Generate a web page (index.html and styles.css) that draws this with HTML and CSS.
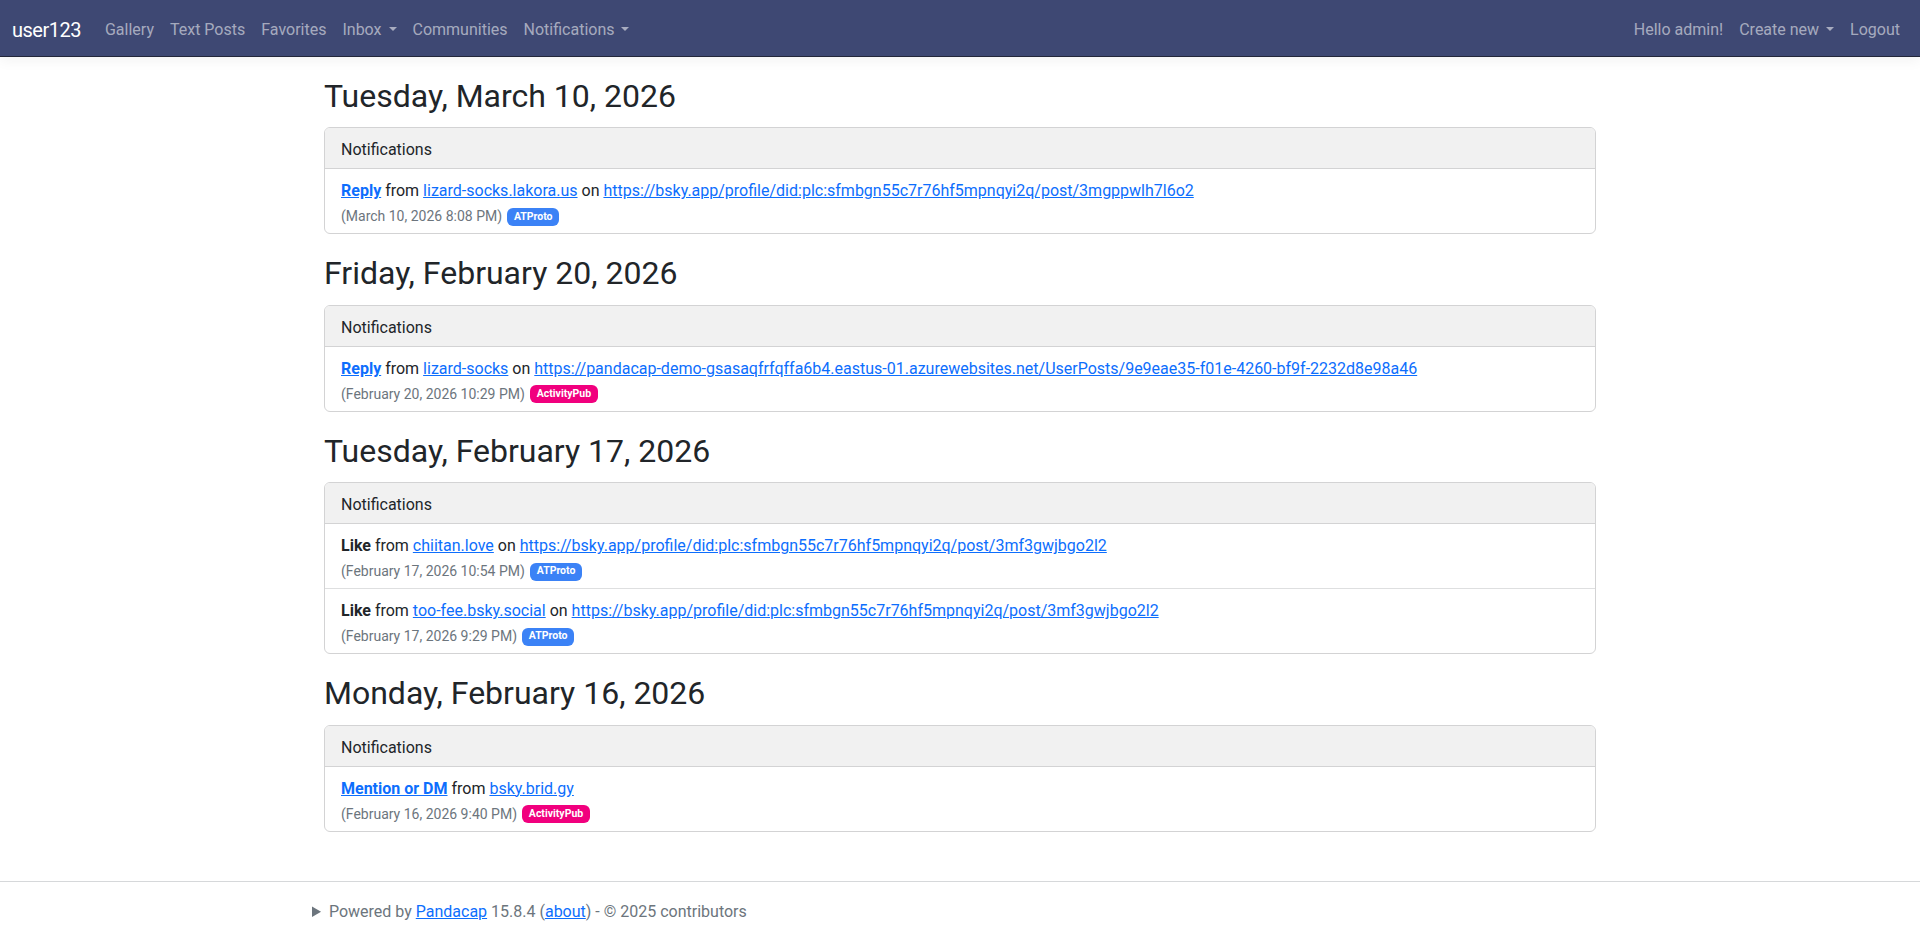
FILE: index.html
```html
<!DOCTYPE html>
<html lang="en">
<head>
  <meta charset="UTF-8">
  <title>Notifications - user123</title>
  <link rel="stylesheet" href="styles.css">
</head>
<body>
  <header>
    <nav class="navbar">
      <div class="navbar-inner">
        <a class="brand" href="#">user123</a>
        <ul class="nav">
          <li><a class="nav-link" href="#">Gallery</a></li>
          <li><a class="nav-link" href="#">Text Posts</a></li>
          <li><a class="nav-link" href="#">Favorites</a></li>
          <li><a class="nav-link dropdown-toggle" href="#">Inbox</a></li>
          <li><a class="nav-link" href="#">Communities</a></li>
          <li><a class="nav-link dropdown-toggle" href="#">Notifications</a></li>
        </ul>
        <ul class="nav nav-right">
          <li><span class="nav-link nav-text">Hello admin!</span></li>
          <li><a class="nav-link dropdown-toggle" href="#">Create new</a></li>
          <li><a class="nav-link" href="#">Logout</a></li>
        </ul>
      </div>
    </nav>
  </header>

  <div class="container">
    <main class="main">
      <h2 class="day">Tuesday, March 10, 2026</h2>
      <div class="card">
        <div class="card-header">Notifications</div>
        <ul class="list">
          <li class="item">
            <div class="line"><a class="strong" href="#">Reply</a> from <a href="#">lizard-socks.lakora.us</a> on <a href="#">https://bsky.app/profile/did:plc:sfmbgn55c7r76hf5mpnqyi2q/post/3mgppwlh7l6o2</a></div>
            <small class="meta"><span class="muted">(March 10, 2026 8:08 PM)</span><span class="badge badge-at">ATProto</span></small>
          </li>
        </ul>
      </div>

      <h2 class="day">Friday, February 20, 2026</h2>
      <div class="card">
        <div class="card-header">Notifications</div>
        <ul class="list">
          <li class="item">
            <div class="line"><a class="strong" href="#">Reply</a> from <a href="#">lizard-socks</a> on <a href="#">https://pandacap-demo-gsasaqfrfqffa6b4.eastus-01.azurewebsites.net/UserPosts/9e9eae35-f01e-4260-bf9f-2232d8e98a46</a></div>
            <small class="meta"><span class="muted">(February 20, 2026 10:29 PM)</span><span class="badge badge-ap">ActivityPub</span></small>
          </li>
        </ul>
      </div>

      <h2 class="day">Tuesday, February 17, 2026</h2>
      <div class="card">
        <div class="card-header">Notifications</div>
        <ul class="list">
          <li class="item">
            <div class="line"><strong>Like</strong> from <a href="#">chiitan.love</a> on <a href="#">https://bsky.app/profile/did:plc:sfmbgn55c7r76hf5mpnqyi2q/post/3mf3gwjbgo2l2</a></div>
            <small class="meta"><span class="muted">(February 17, 2026 10:54 PM)</span><span class="badge badge-at">ATProto</span></small>
          </li>
          <li class="item">
            <div class="line"><strong>Like</strong> from <a href="#">too-fee.bsky.social</a> on <a href="#">https://bsky.app/profile/did:plc:sfmbgn55c7r76hf5mpnqyi2q/post/3mf3gwjbgo2l2</a></div>
            <small class="meta"><span class="muted">(February 17, 2026 9:29 PM)</span><span class="badge badge-at">ATProto</span></small>
          </li>
        </ul>
      </div>

      <h2 class="day">Monday, February 16, 2026</h2>
      <div class="card">
        <div class="card-header">Notifications</div>
        <ul class="list">
          <li class="item">
            <div class="line"><a class="strong" href="#">Mention or DM</a> from <a href="#">bsky.brid.gy</a></div>
            <small class="meta"><span class="muted">(February 16, 2026 9:40 PM)</span><span class="badge badge-ap">ActivityPub</span></small>
          </li>
        </ul>
      </div>
    </main>
  </div>

  <footer class="footer">
    <div class="container">
      <details>
        <summary>Powered by <a href="#">Pandacap</a> 15.8.4 (<a href="#">about</a>) - &copy; 2025 contributors</summary>
      </details>
    </div>
  </footer>
</body>
</html>
```

FILE: styles.css
```css
:root {
  --nav-bg: #3e4873;
  --text: #212529;
  --muted: #6c757d;
  --link: #0d6efd;
  --border: #d3d3d4;
}
html, body {
  margin: 0;
  padding: 0;
}
body {
  font-family: Roboto, "Liberation Sans", Arial, sans-serif;
  font-size: 16px;
  line-height: 1.5;
  color: var(--text);
  background: #fff;
}
a {
  color: var(--link);
  text-decoration: underline;
}

/* Top bar */
.navbar {
  background: var(--nav-bg);
  border-bottom: 1px solid #23273a;
  box-shadow: 0 4px 12px rgba(0, 0, 0, 0.05);
  margin-bottom: 24px;
}
.navbar-inner {
  display: flex;
  align-items: center;
  padding: 10px 12px 6px 12px;
}
.brand {
  color: #fff;
  text-decoration: none;
  font-size: 20px;
  letter-spacing: -0.5px;
  line-height: 30px;
  padding: 5px 0;
  margin-right: 16px;
}
.nav {
  display: flex;
  list-style: none;
  margin: 0;
  padding: 0;
}
.nav-right {
  margin-left: auto;
}
.nav-link {
  display: block;
  padding: 8px;
  color: rgba(255, 255, 255, 0.55);
  text-decoration: none;
}
.dropdown-toggle::after {
  content: "";
  display: inline-block;
  margin-left: 7px;
  vertical-align: 4px;
  border-top: 4px solid;
  border-right: 4px solid transparent;
  border-left: 4px solid transparent;
}

/* Page */
.container {
  max-width: 1320px;
  margin: 0 auto;
  padding: 0 12px;
  box-sizing: border-box;
}
.main {
  padding: 0 12px 25px 12px;
}
.day {
  margin: 0 0 16.4px 0;
  font-size: 32px;
  font-weight: 400;
  line-height: 30px;
}
.card {
  border: 1px solid var(--border);
  border-radius: 6px;
  margin-bottom: 24px;
  overflow: hidden;
}
.card-header {
  padding: 10px 16px 6px 16px;
  background: #f1f1f1;
  border-bottom: 1px solid var(--border);
}
.list {
  list-style: none;
  margin: 0;
  padding: 0;
}
.item {
  padding: 10px 16px 8px 16px;
}
.item + .item {
  border-top: 1px solid #dedfe0;
}
.line {
  height: 24px;
  white-space: nowrap;
}
.strong {
  font-weight: 700;
}
.meta {
  display: flex;
  align-items: center;
  gap: 5px;
  height: 22px;
  padding-top: 5px;
  box-sizing: border-box;
  font-size: 14px;
}
.muted {
  color: var(--muted);
}
.badge {
  display: inline-block;
  padding: 0.35em 0.65em;
  font-size: 0.75em;
  font-weight: 700;
  line-height: 1;
  color: #fff;
  border-radius: 6px;
}
.badge-at { background: #3b82f6; }
.badge-ap { background: #f1007e; }

/* Footer */
.footer {
  border-top: 1px solid #d6d8da;
  line-height: 60px;
  color: var(--muted);
  white-space: nowrap;
}
.footer summary {
  cursor: pointer;
}
```
